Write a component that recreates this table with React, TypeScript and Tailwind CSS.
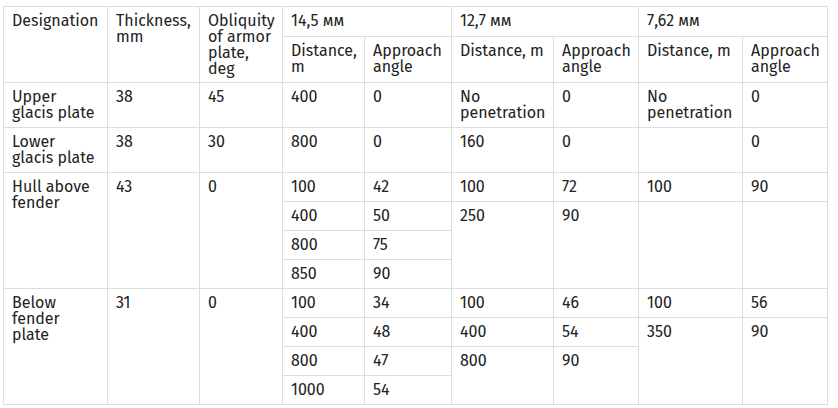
export default function App() {
  const td = 'border border-[#dddddd] px-2 pt-[6px] pb-[6px] align-top text-left font-normal';
  const tdTall = 'border border-[#dddddd] px-2 pt-[6px] pb-[5px] align-top text-left font-normal';

  return (
    <div className="min-h-screen bg-white pl-[3px] pt-[6px]">
      <table
        className="w-[825px] table-fixed border-collapse text-[16px] leading-4 text-[#222222]"
        style={{ fontFamily: '"Fira Sans", "Open Sans", sans-serif' }}
      >
        <colgroup>
          <col className="w-[104px]" />
          <col className="w-[92px]" />
          <col className="w-[83px]" />
          <col className="w-[82px]" />
          <col className="w-[87px]" />
          <col className="w-[102px]" />
          <col className="w-[85px]" />
          <col className="w-[104px]" />
          <col className="w-[85px]" />
        </colgroup>
        <thead>
          <tr>
            <th rowSpan={2} className={td}>Designation</th>
            <th rowSpan={2} className={td}>Thickness, mm</th>
            <th rowSpan={2} className={tdTall}>Obliquity of armor plate, deg</th>
            <th colSpan={2} className={td}>14,5 мм</th>
            <th colSpan={2} className={td}>12,7 мм</th>
            <th colSpan={2} className={td}>7,62 мм</th>
          </tr>
          <tr>
            <th className={td}>Distance, m</th>
            <th className={td}>Approach angle</th>
            <th className={td}>Distance, m</th>
            <th className={td}>Approach angle</th>
            <th className={td}>Distance, m</th>
            <th className={td}>Approach angle</th>
          </tr>
        </thead>
        <tbody>
          {/* Лобовые листы */}
          <tr>
            <td className={td}>Upper glacis plate</td>
            <td className={td}>38</td>
            <td className={td}>45</td>
            <td className={td}>400</td>
            <td className={td}>0</td>
            <td className={td}>No penetration</td>
            <td className={td}>0</td>
            <td className={td}>No penetration</td>
            <td className={td}>0</td>
          </tr>
          <tr>
            <td className={td}>Lower glacis plate</td>
            <td className={td}>38</td>
            <td className={td}>30</td>
            <td className={td}>800</td>
            <td className={td}>0</td>
            <td className={td}>160</td>
            <td className={td}>0</td>
            <td className={td}></td>
            <td className={td}>0</td>
          </tr>

          {/* Борт над крылом */}
          <tr>
            <td rowSpan={4} className={td}>Hull above fender</td>
            <td rowSpan={4} className={td}>43</td>
            <td rowSpan={4} className={td}>0</td>
            <td className={td}>100</td>
            <td className={td}>42</td>
            <td className={td}>100</td>
            <td className={td}>72</td>
            <td className={td}>100</td>
            <td className={td}>90</td>
          </tr>
          <tr>
            <td className={td}>400</td>
            <td className={td}>50</td>
            <td rowSpan={3} className={td}>250</td>
            <td rowSpan={3} className={td}>90</td>
            <td rowSpan={3} className={td}></td>
            <td rowSpan={3} className={td}></td>
          </tr>
          <tr>
            <td className={td}>800</td>
            <td className={td}>75</td>
          </tr>
          <tr>
            <td className={td}>850</td>
            <td className={td}>90</td>
          </tr>

          {/* Борт под крылом */}
          <tr>
            <td rowSpan={4} className={td}>Below fender plate</td>
            <td rowSpan={4} className={td}>31</td>
            <td rowSpan={4} className={td}>0</td>
            <td className={td}>100</td>
            <td className={td}>34</td>
            <td className={td}>100</td>
            <td className={td}>46</td>
            <td className={td}>100</td>
            <td className={td}>56</td>
          </tr>
          <tr>
            <td className={td}>400</td>
            <td className={td}>48</td>
            <td className={td}>400</td>
            <td className={td}>54</td>
            <td rowSpan={3} className={td}>350</td>
            <td rowSpan={3} className={td}>90</td>
          </tr>
          <tr>
            <td className={td}>800</td>
            <td className={td}>47</td>
            <td rowSpan={2} className={td}>800</td>
            <td rowSpan={2} className={td}>90</td>
          </tr>
          <tr>
            <td className={td}>1000</td>
            <td className={td}>54</td>
          </tr>
        </tbody>
      </table>
    </div>
  );
}
